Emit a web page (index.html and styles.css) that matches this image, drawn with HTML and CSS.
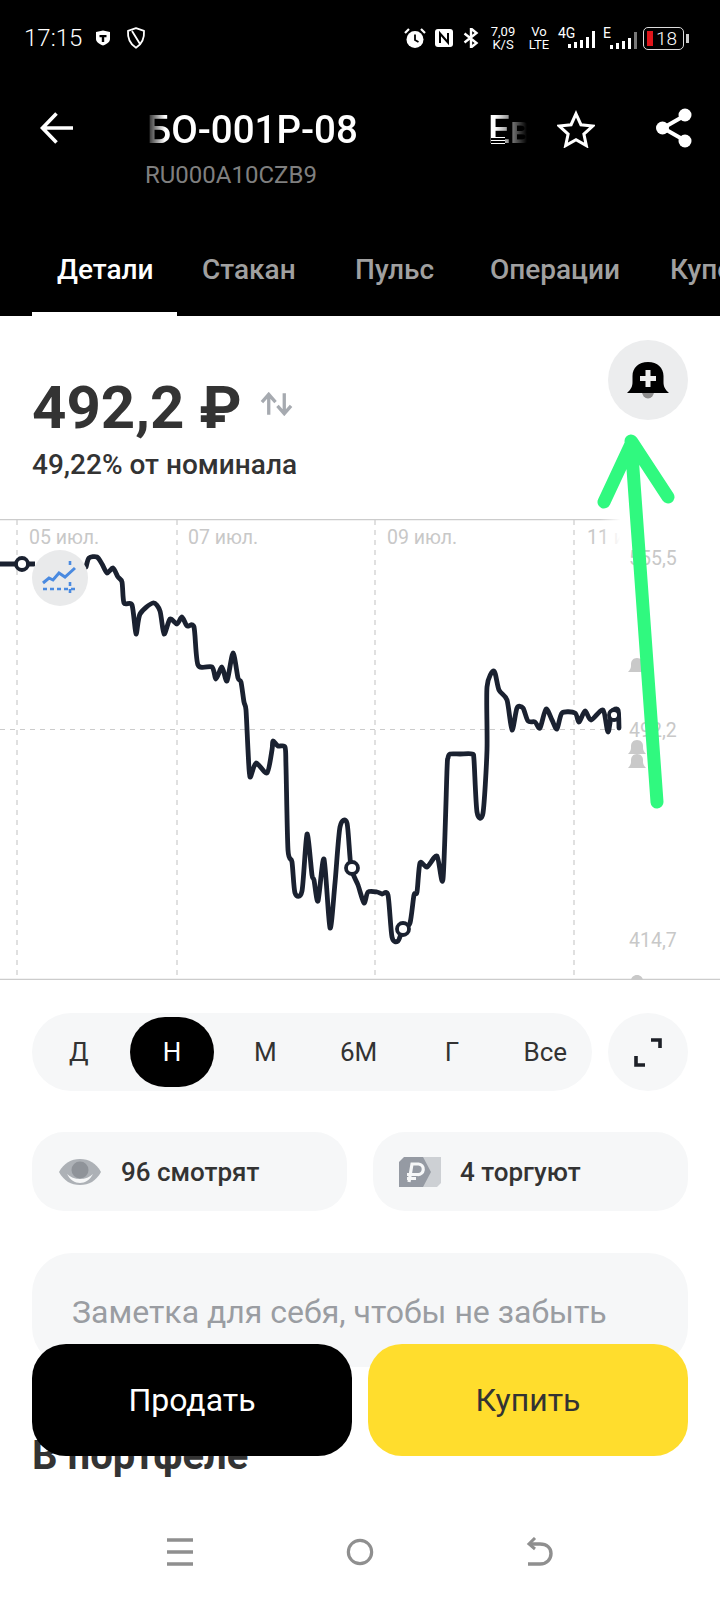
FILE: index.html
```html
<!DOCTYPE html>
<html lang="ru">
<head>
    <meta charset="UTF-8">
    <meta name="viewport" content="width=device-width, initial-scale=1.0">
    <title>БО-001Р-08</title>
    <link rel="stylesheet" href="styles.css">
</head>
<body>
<div class="screen">
    <header class="top">
        <div class="status">
            <span class="time">17:15</span>
            <svg class="st-shield" viewBox="0 0 16 16"><path d="M1 2l7-1.5L15 2v7c0 3-3 5-7 6.500C4 14 1 12 1 9z" fill="#fff"/><path d="M4.500 5h7v2.200H9.200V12H6.800V7.200H4.500z" fill="#000"/></svg>
            <svg class="st-shield2" viewBox="0 0 20 22"><path d="M10 1.200l8 2.600c.5 7-1.500 13-8 17C3.500 16.800 1.500 10.800 2 3.800z M6 4l8 13" fill="none" stroke="#fff" stroke-width="1.800" stroke-linejoin="round"/></svg>
            <span class="status-space"></span>
            <svg class="st-alarm" viewBox="0 0 22 22"><circle cx="11" cy="12.500" r="8.500" fill="#fff"/><path d="M11 7.500v5.500l3.500 2" fill="none" stroke="#000" stroke-width="1.800"/><path d="M1 6l4-4M21 6l-4-4" stroke="#fff" stroke-width="2.200"/></svg>
            <svg class="st-nfc" viewBox="0 0 20 20"><rect x="1" y="1" width="18" height="18" rx="3" fill="#fff"/><path d="M6 15V5.500l8 9V5" fill="none" stroke="#000" stroke-width="2"/></svg>
            <svg class="st-bt" viewBox="0 0 16 20"><path d="M1.500 5.500l12 9.500L8 19.500V.5l5.500 4.500-12 9.500" fill="none" stroke="#fff" stroke-width="2.400"/></svg>
            <span class="st-stack st-speed"><b>7,09</b><b>K/S</b></span>
            <span class="st-stack st-volte"><b>Vo</b><b>LTE</b></span>
            <span class="st-net st-net1">
                <span class="st-net-label">4G</span>
                <span class="bars"><i class="b1"></i><i class="b2"></i><i class="b3"></i><i class="b4"></i><i class="b5"></i></span>
            </span>
            <span class="st-net st-net2">
                <span class="st-net-label">E</span>
                <span class="bars"><i class="b1"></i><i class="b2"></i><i class="b3"></i><i class="b4"></i><i class="b5 dim"></i></span>
            </span>
            <span class="battery"><i class="battery-fill"></i><span>18</span></span>
        </div>

        <div class="bar">
            <svg class="ic-back" viewBox="0 0 33 32"><path d="M16.500 1.500L2.500 16l14 14.500M3 16h30" fill="none" stroke="#fff" stroke-width="3.600"/></svg>
            <div class="heading">
                <div class="ticker"><span class="ticker-text"><span class="ticker-a">БО-001Р-08</span><span class="ticker-b">Евро</span></span></div>
                <div class="isin">RU000A10CZB9</div>
            </div>
            <svg class="ic-star" viewBox="0 0 40 38"><path d="M20 3l5.200 11.500 12.300 1.400-9.200 8.400 2.600 12.200L20 30.300 9.100 36.500l2.600-12.200-9.200-8.400 12.300-1.400z" fill="none" stroke="#fff" stroke-width="3.200" stroke-linejoin="miter"/></svg>
            <svg class="ic-share" viewBox="0 0 37 40"><path d="M29 8L8 20l21 12" fill="none" stroke="#fff" stroke-width="4"/><circle cx="30" cy="7" r="6.500" fill="#fff"/><circle cx="7.500" cy="20" r="6.500" fill="#fff"/><circle cx="30" cy="33" r="6.500" fill="#fff"/></svg>
        </div>

        <nav class="tabs">
            <span class="tab tab-on">Детали</span>
            <span class="tab tab-2">Стакан</span>
            <span class="tab tab-3">Пульс</span>
            <span class="tab tab-4">Операции</span>
            <span class="tab tab-5">Купоны</span>
        </nav>
        <i class="glitch"></i>
    </header>

    <section class="quote">
        <div>
            <div class="price-row">
                <span class="price">492,2 ₽</span>
                <svg class="ic-swap" viewBox="0 0 34 24"><path d="M9 23V3M2 10l7-8 7 8" fill="none" stroke="#a6aab0" stroke-width="3.400"/><path d="M25 1v20M18 14l7 8 7-8" fill="none" stroke="#a6aab0" stroke-width="3.400"/></svg>
            </div>
            <div class="nominal">49,22% от номинала</div>
        </div>
        <button class="alert-btn" type="button">
            <svg viewBox="0 0 42 42"><path d="M15 33a6 6.500 0 0 0 12 0z" fill="#8d8d8d"/><path d="M21 3c9.500 0 15.500 6 15.500 14v6c0 4 1 7 5.500 11H0c4.500-4 5.500-7 5.500-11v-6C5.500 9 11.500 3 21 3z" fill="#000"/><path d="M18.500 11h5v6H29v5h-5.500v6h-5v-6H13v-5h5.500z" fill="#eee"/></svg>
        </button>
    </section>

    <section class="chart">
        <svg id="chart" viewBox="0 519 720 461" width="720" height="461">
            <path d="M0 519.500H720M0 979.500H720" stroke="#ccc" stroke-width="1.500"/>
            <path d="M17 520V979M177 520V979M375 520V979M574 520V979M0 729.500H620" stroke="#ccc" stroke-width="1.200" stroke-dasharray="5 5"/>
            <text class="ax" x="29" y="544">05 июл.</text>
            <text class="ax" x="188" y="544">07 июл.</text>
            <text class="ax" x="387" y="544">09 июл.</text>
            <text class="ax" x="587" y="544">11 июл.</text>
            <rect x="600" y="519" width="120" height="40" fill="url(#fade)"/>
            <text class="ax" x="629" y="565">555,5</text>
            <text class="ax" x="629" y="737">492,2</text>
            <text class="ax" x="629" y="947">414,7</text>
            <g fill="#c9c9c9">
                <path id="mini" d="M637 658c4 0 6 3 6 6v2c0 2 1 4 3 6h-18c2-2 3-4 3-6v-2c0-3 2-6 6-6z"/>
                <use href="#mini" y="82"/>
                <use href="#mini" y="96"/>
                <use href="#mini" y="317"/>
            </g>
            <defs>
                <linearGradient id="fade" x1="0" x2="1" y1="0" y2="0"><stop offset="0" stop-color="#fff" stop-opacity="0"/><stop offset=".17" stop-color="#fff"/></linearGradient>
            </defs>
            <path id="line" d="" fill="none" stroke="#1a2130" stroke-width="4.800" stroke-linejoin="round" stroke-linecap="round"/>
            <path d="M0 564H35" stroke="#1a2130" stroke-width="4.800"/>
            <circle class="dot" cx="22" cy="564" r="6"/>
            <circle class="dot" cx="352" cy="868" r="6"/>
            <circle class="dot" cx="403" cy="929" r="6"/>
            <circle class="dot" cx="614" cy="715" r="5"/>
            <circle cx="60" cy="578" r="28" fill="#e9eaeb"/>
            <path d="M43 583l6-5 4 2 6-7 6 4 10-9" fill="none" stroke="#4a8ae0" stroke-width="3"/>
            <path d="M43 589H78M70 582v14M70 561v5" fill="none" stroke="#4a8ae0" stroke-width="2.600" stroke-dasharray="4 3"/>
        </svg>
    </section>

    <section class="range-row">
        <div class="range">
            <span class="range-item">Д</span>
            <span class="range-item range-on">Н</span>
            <span class="range-item">М</span>
            <span class="range-item">6М</span>
            <span class="range-item">Г</span>
            <span class="range-item">Все</span>
        </div>
        <button class="expand" type="button">
            <svg viewBox="0 0 28 29"><path d="M17 2h9v8M2 18v9h9" fill="none" stroke="#1d2027" stroke-width="3.600"/></svg>
        </button>
    </section>

    <section class="chips">
        <div class="chip">
            <svg class="ic-eye" viewBox="0 0 44 28"><path d="M1 14C6 5 13 1 22 1s16 4 21 13c-5 9-12 13-21 13S6 23 1 14z" fill="#adb1b6"/><circle cx="22" cy="12" r="8.500" fill="#8f9399"/><path d="M9 16c3 6 8 9 13 9s10-3 13-9c-3 3-8 5-13 5s-10-2-13-5z" fill="#f6f7f8"/></svg>
            <span>96 смотрят</span>
        </div>
        <div class="chip">
            <svg class="ic-rub" viewBox="0 0 42 30"><path d="M12 0h30v26l-4 4H16z" fill="#cdd0d4"/><path d="M5 0h19l8 15-8 15H0V5z" fill="#959aa3"/><path d="M10 25l3-18h6.500a4.500 4.500 0 0 1-1 10.500H8M8 21.500h9" fill="none" stroke="#f6f7f8" stroke-width="3.200"/></svg>
            <span>4 торгуют</span>
        </div>
    </section>

    <section class="note">Заметка для себя, чтобы не забыть</section>

    <h2 class="folio">В портфеле</h2>

    <div class="actions">
        <button class="act act-sell" type="button">Продать</button>
        <button class="act act-buy" type="button">Купить</button>
    </div>

    <nav class="sysnav">
        <svg class="nav-ic" viewBox="0 0 28 30"><path d="M1 3h26M1 15h26M1 27h26" stroke="#8f8f8f" stroke-width="3.400"/></svg>
        <svg class="nav-ic" viewBox="0 0 30 30"><circle cx="15" cy="15" r="12.500" fill="none" stroke="#8f8f8f" stroke-width="3.400"/></svg>
        <svg class="nav-ic" viewBox="0 0 28 30"><path d="M9 1L3 7l6 5" fill="none" stroke="#8f8f8f" stroke-width="3"/><path d="M4 7h10c7 0 11 4 11 9.500S21 27 14 27H2" fill="none" stroke="#8f8f8f" stroke-width="3.400"/></svg>
    </nav>

    <svg class="arrow" viewBox="0 0 720 1600" width="720" height="1600">
        <path d="M657 802L631 441M604 502L632 442L668 497" fill="none" stroke="#30f97f" stroke-width="13" stroke-linecap="round" stroke-linejoin="round"/>
    </svg>
</div>
<script src="chart.js"></script>
</body>
</html>
```

FILE: styles.css
```css
* {
    box-sizing: border-box;
}
body {
    margin: 0;
    background: #fff;
    font-family: Roboto, "Noto Sans", sans-serif;
    color: #333;
}
button {
    border: none;
    padding: 0;
    font-family: inherit;
}
svg {
    display: block;
    flex: none;
}
.screen {
    position: relative;
    width: 720px;
    height: 1600px;
    overflow: hidden;
}

/* шапка */
.top {
    height: 316px;
    background: #000;
    color: #fff;
}
.status {
    display: flex;
    align-items: center;
    height: 76px;
    padding: 0 36px 0 24px;
}
.time {
    font-size: 24px;
    font-weight: 300;
    width: 71px;
}
.st-shield {
    width: 16px;
    height: 16px;
    margin-right: 15px;
}
.st-shield2 {
    width: 20px;
    height: 22px;
}
.status-space {
    flex: 1;
}
.st-alarm {
    width: 22px;
    height: 22px;
    margin-right: 8px;
}
.st-nfc {
    width: 20px;
    height: 20px;
    margin-right: 9px;
}
.st-bt {
    width: 16px;
    height: 20px;
    margin-right: 11px;
}
.st-stack {
    display: flex;
    flex-direction: column;
    align-items: center;
    line-height: 13px;
    font-size: 13px;
}
.st-stack b {
    font-weight: 400;
}
.st-speed {
    width: 26px;
    margin-right: 12px;
}
.st-volte {
    width: 22px;
    margin-right: 8px;
}
.st-net {
    display: flex;
    flex-direction: column;
    font-size: 14px;
    line-height: 11px;
}
.st-net1 {
    width: 37px;
    margin-right: 8px;
}
.st-net2 {
    width: 34px;
    margin-right: 6px;
}
.bars {
    display: flex;
    align-items: flex-end;
    justify-content: flex-end;
    gap: 3px;
    height: 10px;
}
.st-net1 .bars {
    margin-top: -1px;
}
.bars i {
    width: 3px;
    background: #fff;
}
.bars .b1 { height: 4px; }
.bars .b2 { height: 6px; }
.bars .b3 { height: 8px; }
.bars .b4 { height: 11px; }
.bars .b5 { height: 17px; }
.bars .dim { background: #777; }
.battery {
    position: relative;
    display: flex;
    align-items: center;
    width: 41px;
    height: 23px;
    padding-left: 12px;
    border: 1.500px solid #ddd;
    border-radius: 5px;
    font-size: 19px;
    font-weight: 300;
    line-height: 1;
}
.battery::after {
    content: "";
    position: absolute;
    right: -6px;
    top: 6px;
    width: 3px;
    height: 9px;
    background: #ccc;
}
.battery-fill {
    position: absolute;
    left: 3px;
    top: 3px;
    bottom: 3px;
    width: 6px;
    background: #e0161b;
}

.bar {
    display: flex;
    align-items: flex-start;
    height: 174px;
    padding: 32px 30px 0 40px;
}
.ic-back {
    width: 33px;
    height: 32px;
    margin-top: 4px;
    margin-right: 72px;
}
.heading {
    width: 382px;
    margin-right: 30px;
}
.ticker {
    overflow: hidden;
    -webkit-mask-image: linear-gradient(90deg, transparent, #000 20px, #000 calc(100% - 32px), transparent);
    mask-image: linear-gradient(90deg, transparent, #000 20px, #000 calc(100% - 32px), transparent);
}
.ticker-text {
    display: block;
    margin-left: 2px;
    white-space: nowrap;
    font-size: 38.500px;
    line-height: 44px;
    font-weight: 500;
}
.ticker-a {
    margin-right: 130px;
}
.isin {
    margin-top: 9px;
    font-size: 24px;
    line-height: 28px;
    color: #7f7f7f;
}
.ic-star {
    width: 38px;
    height: 38px;
    margin-top: 2px;
    margin-right: 60px;
}
.ic-share {
    width: 37px;
    height: 40px;
}
.glitch {
    position: absolute;
    left: 491px;
    top: 137px;
    width: 14px;
    height: 7px;
    background: repeating-linear-gradient(#fff 0 1px, #000 1px 3px);
}

.tabs {
    display: flex;
    height: 66px;
    white-space: nowrap;
    font-size: 28px;
    line-height: 32px;
    font-weight: 500;
    color: #a0a0a0;
}
.tab {
    flex: none;
    padding-top: 4px;
}
.tab-on {
    width: 145px;
    margin-left: 32px;
    padding-left: 25px;
    border-bottom: 4px solid #fff;
    color: #fff;
}
.tab-2 { width: 153px; margin-left: 25px; }
.tab-3 { width: 135px; }
.tab-4 { width: 180px; }

/* цена */
.quote {
    display: flex;
    justify-content: space-between;
    height: 203px;
    padding: 24px 32px 0;
}
.price-row {
    display: flex;
    align-items: center;
    height: 80px;
    margin-top: 28px;
}
.price {
    font-size: 60px;
    line-height: 80px;
    font-weight: 700;
    color: #333;
}
.ic-swap {
    width: 33px;
    height: 24px;
    margin-left: 18px;
    margin-top: -8px;
}
.nominal {
    margin-top: 1px;
    font-size: 28px;
    line-height: 32px;
    font-weight: 500;
}
.alert-btn {
    display: flex;
    align-items: center;
    justify-content: center;
    width: 80px;
    height: 80px;
    border-radius: 50%;
    background: #ecedee;
}
.alert-btn svg {
    width: 42px;
    height: 42px;
}

/* график */
.chart {
    height: 461px;
}
.ax {
    font-family: Roboto, sans-serif;
    font-size: 19.500px;
    fill: #c8c8c8;
}
.dot {
    fill: #fff;
    stroke: #1a2130;
    stroke-width: 3.800;
}

/* периоды */
.range-row {
    display: flex;
    justify-content: space-between;
    height: 119px;
    padding: 33px 32px 0;
}
.range {
    display: grid;
    grid-template-columns: repeat(6, 1fr);
    align-items: center;
    width: 560px;
    height: 78px;
    border-radius: 39px;
    background: #f6f7f8;
    font-size: 26px;
    color: #333;
}
.range-item {
    justify-self: center;
    display: flex;
    align-items: center;
    justify-content: center;
    height: 70px;
    width: 84px;
}
.range-on {
    border-radius: 35px;
    background: #000;
    color: #fff;
}
.expand {
    display: flex;
    align-items: center;
    justify-content: center;
    width: 80px;
    height: 78px;
    border-radius: 50%;
    background: #f6f7f8;
}
.expand svg {
    width: 28px;
    height: 29px;
}

.chips {
    display: flex;
    justify-content: space-between;
    height: 154px;
    padding: 33px 32px 0;
}
.chip {
    display: flex;
    align-items: center;
    width: 315px;
    height: 79px;
    padding-left: 26px;
    border-radius: 32px;
    background: #f6f7f8;
    font-size: 26px;
    font-weight: 500;
}
.ic-eye {
    width: 44px;
    height: 28px;
    margin-right: 19px;
}
.ic-rub {
    width: 42px;
    height: 30px;
    margin-right: 19px;
}

.note {
    display: flex;
    align-items: center;
    height: 114px;
    margin: 0 32px;
    padding: 4px 40px 0;
    border-radius: 40px;
    background: #f6f7f8;
    font-size: 32px;
    color: #9a9da2;
}
.folio {
    margin: 68px 32px 0;
    font-size: 40px;
    line-height: 42px;
    font-weight: 700;
    color: #333;
}

.actions {
    position: absolute;
    left: 32px;
    right: 32px;
    top: 1344px;
    display: flex;
    gap: 16px;
}
.act {
    flex: 1;
    height: 112px;
    border-radius: 34px;
    font-size: 32px;
}
.act-sell {
    background: #000;
    color: #fff;
}
.act-buy {
    background: #ffdd2d;
    color: #333;
}

.sysnav {
    position: absolute;
    left: 0;
    right: 0;
    top: 1537px;
    display: flex;
    justify-content: center;
    gap: 152px;
}
.nav-ic {
    width: 28px;
    height: 30px;
}

/* стрелка поверх скриншота */
.arrow {
    position: absolute;
    left: 0;
    top: 0;
    pointer-events: none;
}
```

FILE: chart.js
```js
// точки графика, px внутри svg
const points = [
    [86, 567], [89, 558], [97, 557], [102, 564], [107, 573], [113, 568], [118, 577], [122, 582],
    [124, 603], [132, 605], [136, 634], [140, 614], [153, 603], [160, 611], [164, 634], [170, 619],
    [177, 624], [182, 617], [187, 626], [194, 627], [198, 665], [212, 667], [216, 679], [222, 667],
    [227, 681], [233, 653], [238, 678], [241, 682], [244, 702], [246, 710], [248, 750], [250, 777],
    [256, 763], [267, 773], [272, 750], [273, 741], [278, 746], [285, 747], [286, 767], [288, 850],
    [292, 862], [295, 893], [302, 891], [307, 834], [312, 875], [314, 880], [318, 901], [324, 859],
    [330, 928], [335, 883], [340, 827], [347, 823], [351, 867], [358, 885], [364, 903], [368, 892],
    [377, 892], [382, 894], [388, 895], [392, 937], [398, 941], [403, 929], [410, 923], [414, 895],
    [417, 892], [420, 863], [427, 867], [437, 856], [443, 879], [447, 770], [448, 758], [450, 754],
    [460, 754], [472, 754], [474, 760], [477, 812], [483, 813], [487, 750], [487, 687], [494, 671],
    [499, 690], [507, 700], [512, 730], [517, 708], [523, 708], [528, 721], [535, 722], [540, 728],
    [546, 709], [552, 720], [557, 729], [562, 713], [575, 713], [579, 722], [585, 711], [591, 720],
    [603, 710], [608, 732], [612, 712], [618, 710], [619, 728]
];

function smoothPath(pts) {
    const k = 0.13;
    let d = "M" + pts[0].join(" ");
    for (let i = 0; i < pts.length - 1; i++) {
        const p0 = pts[i - 1] || pts[i];
        const p1 = pts[i];
        const p2 = pts[i + 1];
        const p3 = pts[i + 2] || p2;
        const c1x = p1[0] + (p2[0] - p0[0]) * k;
        const c1y = p1[1] + (p2[1] - p0[1]) * k;
        const c2x = p2[0] - (p3[0] - p1[0]) * k;
        const c2y = p2[1] - (p3[1] - p1[1]) * k;
        d += ` C${c1x.toFixed(1)} ${c1y.toFixed(1)} ${c2x.toFixed(1)} ${c2y.toFixed(1)} ${p2[0]} ${p2[1]}`;
    }
    return d;
}

document.getElementById("line").setAttribute("d", smoothPath(points));
```
